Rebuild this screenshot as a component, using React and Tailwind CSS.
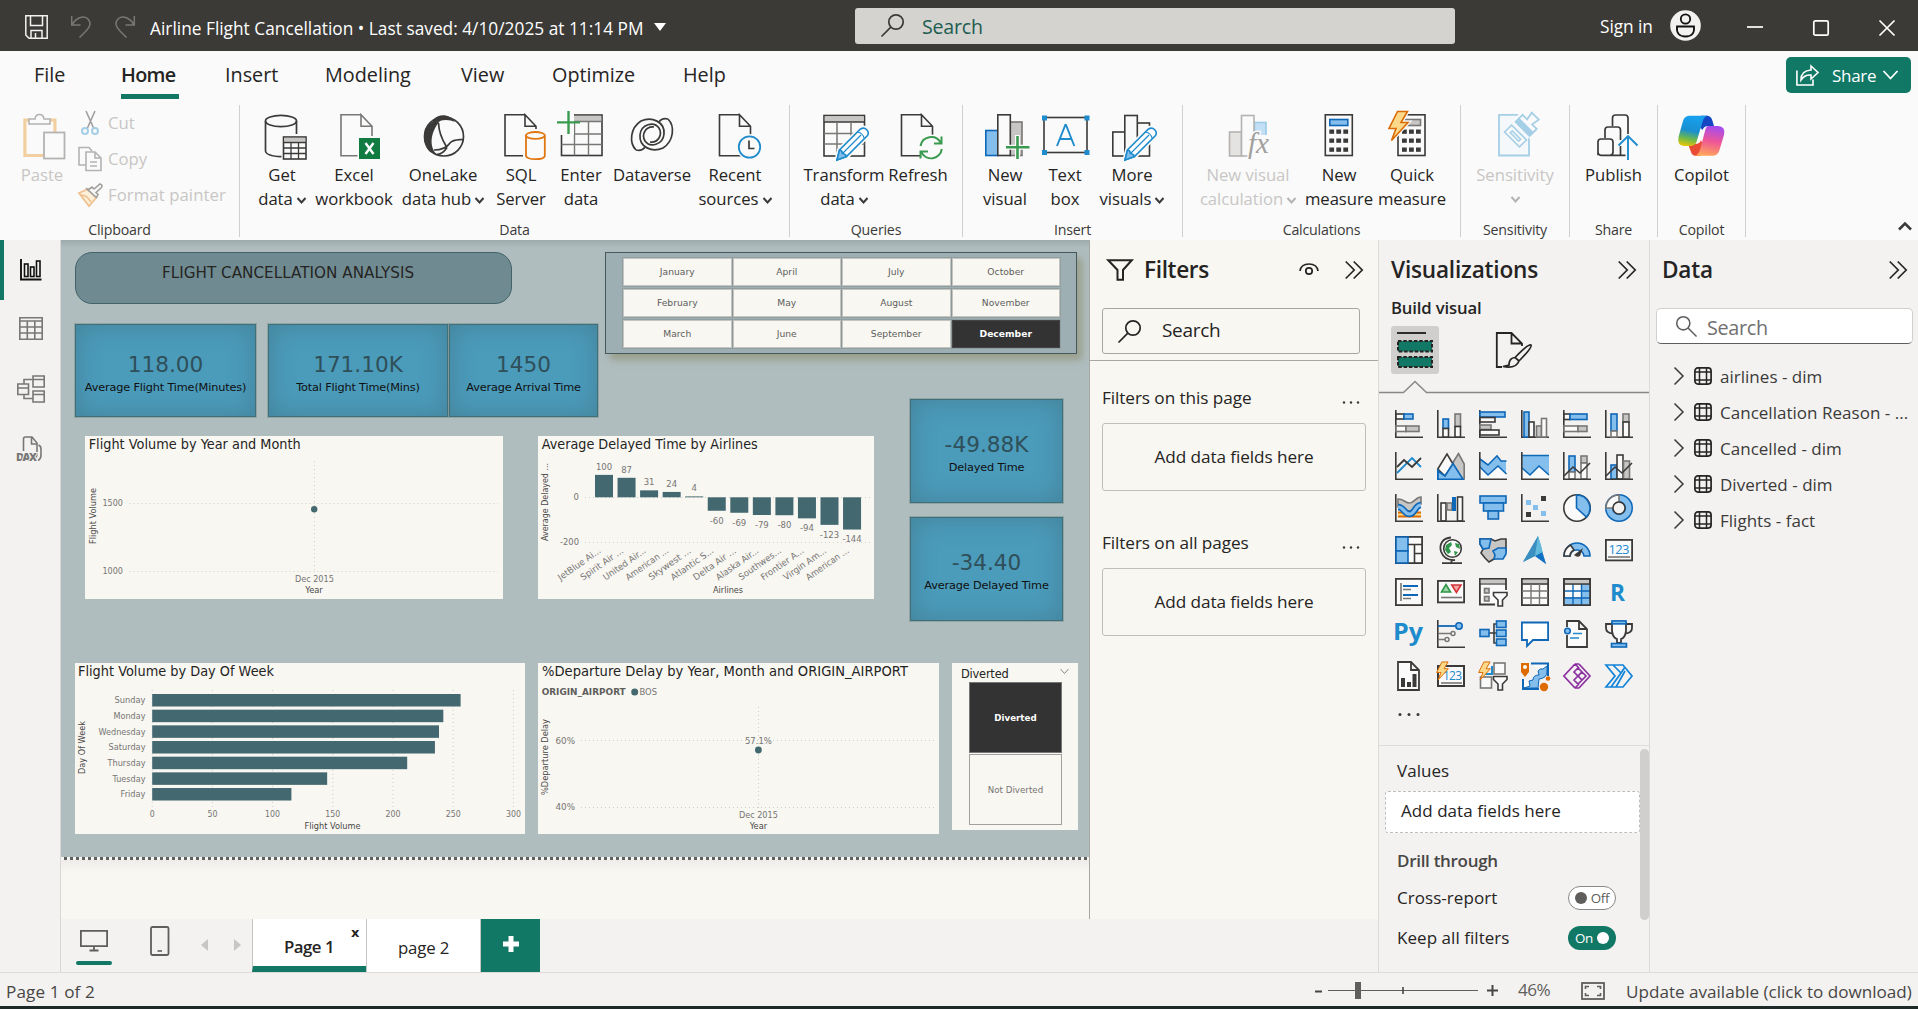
import React from 'react';

/* ---------- palette ---------- */
const K = '#3b3a39';
const BL = '#83beec';
const BD = '#0f67b7';
const BM = '#1e8bcd';
const GR = '#c8c6c4';
const GD = '#797775';
const WH = '#fafafa';
const TEAL = '#43686f';

/* ---------- drawing helpers ---------- */
const R = ({ x, y, w, h, f = 'none', s, sw = 1.6, ...p }) => (
  <rect x={x} y={y} width={w} height={h} fill={f} stroke={s} strokeWidth={s ? sw : 0} {...p} />
);
const P = ({ d, f = 'none', s, sw = 1.6, ...p }) => (
  <path d={d} fill={f} stroke={s} strokeWidth={s ? sw : 0} {...p} />
);
const Bl = (p) => <R f={BL} s={BD} {...p} />;
const Gy = (p) => <R f={GR} s={GD} {...p} />;
const Wt = (p) => <R f={WH} s={K} {...p} />;
const Axis = () => <P d="M.8 0V27.2H28" s={K} />;

const Svg = ({ w, h, children, className = '', vb }) => (
  <svg width={w} height={h} viewBox={vb || `0 0 ${w} ${h}`} className={'shrink-0 overflow-visible ' + className}>
    {children}
  </svg>
);

/* ---------- ribbon icons, 48 x 52 ---------- */
const Doc = ({ x, y = 4.8, w = 31, h = 41, s = K }) => (
  <P d={`M${x + w - 11} ${y}H${x}V${y + h}H${x + w}V${y + 11.5}L${x + w - 11} ${y}V${y + 11.5}H${x + w}`} f={WH} s={s} />
);
const Pencil = () => (
  <g>
    <P d="M17 50L19.5 40L40.5 19Q44 17 46.5 19.5Q49.5 22.5 47.5 25.5L26.5 46.5Z" f={WH} s={WH} sw="5" />
    <P d="M17 50L19.5 40L40.5 19Q44 17 46.5 19.5Q49.5 22.5 47.5 25.5L26.5 46.5Z" f="#fff" s={BM} />
    <P d="M17 50L19.5 40Q22 40 22.5 43.5Q26 44 26.5 46.5Z" f={BL} s={BM} />
    <P d="M37.5 22Q43 23 44.5 29M22.5 43.5L41 25" s={BM} sw="1.2" />
  </g>
);
const Bolt = () => <P d="M9.5 1.5H19.5L13 12.5H20L3.5 30.5L8 18.5H1Z" f="#fcd98a" s="#d96c06" />;

const GetData = () => (
  <g>
    <P d="M7.5 11V41Q7.5 46.5 22 46.5H24V26H38.5V11" f={WH} />
    <ellipse cx="23" cy="11" rx="15.5" ry="5.6" fill={WH} stroke={K} strokeWidth="1.7" />
    <P d="M7.5 11V41Q8 46 23.5 46.7M38.5 11V24" s={K} sw="1.7" />
    <Wt x={25.5} y={27} w={22.5} h={22} />
    <R x={26.3} y={27.8} w={21} h={4} f={GR} />
    <P d="M25.5 32.5H48M25.5 38H48M25.5 43.5H48M33 32V49M40.5 32V49" s={K} sw="1.3" />
  </g>
);
const ExcelI = () => (
  <g transform="translate(1 0)">
    <Doc x={10} s={GD} />
    <R x={26.5} y={26} w={23} h={24} f={WH} />
    <R x={28} y={28} w={21} h={21} f="#107c41" />
    <P d="M34.5 33L42.5 44M42.5 33L34.5 44" s="#fff" sw="2.4" />
  </g>
);
const OneLake = () => (
  <g>
    <circle cx="25" cy="26.5" r="19.5" fill={WH} stroke={K} strokeWidth="1.7" />
    <P d="M14 10C19 3.5 31 3.5 36 12C30 9 20 9 14 15Z" f={K} />
    <P d="M13 12C3 18 2.5 36 12 42.5L17 44C9 34 13 20 21 11Z" f={K} />
    <P d="M19.5 13C20 26 26 34 28 37.5M15 40C24 40 28 37.5 31 33C34 29.5 38 30 44 29.5M28 37.5Q24 44 18 44.5" s={K} sw="1.7" />
  </g>
);
const SqlI = () => (
  <g>
    <Doc x={8} />
    <R x={26} y={19} w={23} h={31} f={WH} />
    <P d="M29 25.5V46Q30 49.2 38.5 49.2Q47 49.2 47.8 46V25.5" f={WH} s="#e07712" sw="1.8" />
    <ellipse cx="38.4" cy="25.4" rx="9.4" ry="3.4" fill={WH} stroke="#e07712" strokeWidth="1.8" />
  </g>
);
const EnterI = () => (
  <g>
    <Wt x={4.5} y={5} w={40.5} h={40.5} />
    <R x={5.3} y={5.8} w={39} h={5.5} f={GR} />
    <P d="M4.5 11.5H45M4.5 24H45M4.5 34.5H45M17.5 11.5V45.5M31.5 11.5V45.5" s={GD} sw="1.4" />
    <R x={0} y={0} w={17} h={25} f={WH} />
    <P d="M11.5 1V24M0 12.4H23" s="#3a9b50" sw="2.4" />
  </g>
);
const DataverseI = () => (
  <g>
    <P d="M8 40C1 33 2 18 13 11C24 6 37 12 36 24C35 35 22 38 17 31C13 24 18 16 26 17" s={K} sw="1.7" />
    <P d="M40 9C47 16 46 31 35 38C24 43 11 37 12 25C13 14 26 11 31 18C35 25 30 33 22 32" s={K} sw="1.7" />
    <P d="M40 9C36 8 33 9 31 12M8 40C12 41 15 40 17 37" s={K} sw="1.7" />
  </g>
);
const RecentI = () => (
  <g>
    <Doc x={8.5} />
    <circle cx="38.5" cy="37" r="13" fill={WH} />
    <circle cx="38.5" cy="37" r="10.7" fill={WH} stroke={BM} strokeWidth="1.8" />
    <P d="M38 30.5V38.5H43.5" s={K} sw="1.7" />
  </g>
);
const TransformI = () => (
  <g>
    <Wt x={4} y={5.5} w={40.5} h={40.5} />
    <R x={4.8} y={6.3} w={39} h={5.5} f={GR} />
    <P d="M4 12H44.5" s={K} sw="1.6" />
    <P d="M4 23.5H44.5M4 34H44.5M17 12V46M31 12V46" s={GD} sw="1.5" />
    <Pencil />
  </g>
);
const RefreshI = () => (
  <g>
    <Doc x={7.5} />
    <circle cx="37" cy="37.5" r="13" fill={WH} />
    <P d="M26.5 36A10.8 10.8 0 0 1 46.5 32.5M47.8 39A10.8 10.8 0 0 1 27.5 42.5M47.5 26.5V33.5H40M26.5 48.5V41.5H34" s="#3a9b50" sw="2" />
  </g>
);
const NewVisualI = () => (
  <g>
    <Bl x={4.8} y={20.5} w={12} h={25} />
    <Gy x={29} y={12} w={12} h={33.5} />
    <Wt x={16.8} y={4.8} w={12.5} h={40.7} />
    <P d="M36.5 25V50M25 37.2H48.5" s={WH} sw="5" />
    <P d="M36.5 26V49M25 37.2H48.5" s="#3a9b50" sw="2.6" />
  </g>
);
const TextBoxI = () => (
  <g>
    <Wt x={3} y={7.5} w={43} h={35} />
    <P d="M16 36L24.3 15H25L33.3 36M19 29H30.3" s={BM} sw="1.9" />
    {[[1, 5.5], [43.5, 5.5], [1, 40], [43.5, 40]].map(([x, y]) => (
      <R key={x + '-' + y} x={x} y={y} w={5} h={5} f={BM} />
    ))}
  </g>
);
const MoreVisualsI = () => (
  <g>
    <Wt x={4.8} y={22} w={12} h={24} />
    <Wt x={29} y={13} w={12.5} h={33} />
    <Wt x={16.8} y={5.5} w={12.5} h={40.5} />
    <Pencil />
  </g>
);
const NvcI = () => (
  <g>
    <R x={5.5} y={22} w={12} h={24} f="#e4e3e1" s="#b5b3b1" />
    <R x={30.5} y={12.5} w={11.5} h={22} f="#c3dff5" s="#9ccbe8" />
    <R x={17.5} y={5.5} w={12.5} h={40.5} f={WH} s="#b5b3b1" />
    <R x={27} y={25} w={22} h={24} f={WH} />
    <text x="24" y="43" fontSize="29" fontStyle="italic" fill="#a19f9d" stroke={WH} strokeWidth="3" paintOrder="stroke" fontFamily="Liberation Serif, serif">fx</text>
  </g>
);
const Calc = ({ x = 10.3, top = BL, ts = BD }) => (
  <g>
    <Wt x={x} y={4.8} w={27} h={40.7} />
    <R x={x + 4.5} y={9.5} w={18} h={6} f={top} s={ts} />
    {[19.5, 28.5, 37.5].map((y) => [0, 7, 14].map((dx) => <R key={y + dx} x={x + 4 + dx} y={y} w={4.8} h={4.3} f={K} />))}
  </g>
);
const QuickI = () => (
  <g>
    <Calc x={10} top={GR} ts={GD} />
    <P d="M9.5 1.5H19.5L13 12.5H20L3.5 30.5L8 18.5H1Z" f={WH} s={WH} sw="4" />
    <Bolt />
  </g>
);
const SensI = () => (
  <g>
    <P d="M27 4.8H8V45.5H38V27" f="#f4f8fb" s="#a5cfe6" sw="1.8" />
    <g transform="translate(24.5 26) rotate(45)">
      <R x={-13} y={-30} w={26} h={22} f={WH} />
      <R x={-10.5} y={-5} w={21} h={10} f={WH} s="#a5cfe6" />
      <R x={-6} y={-1.5} w={12} h={3} f="#e3f0f8" s="#a5cfe6" sw="1.4" />
      <P d="M-10 -10V-20H-3.500L-5 -28H5L3.500 -20H10V-10Z" f={WH} s="#a5cfe6" sw="1.8" />
      <R x={-10} y={-15.5} w={20} h={6} f="#a5cfe6" />
    </g>
  </g>
);
const PublishI = () => (
  <g fill="none" stroke={K} strokeWidth="1.7">
    <path d="M22.5 16V8Q22.5 5 25.5 5H35Q38 5 38 8V24M15 28V20Q15 17 18 17H27.5Q30.5 17 30.5 20V30M8 45.3V32Q8 29 11 29H20Q23 29 23 32V42Q23 45.3 20 45.3H11Q8 45.3 8 42M19 45.3H35.5M30.5 36V45" />
    <path d="M38 50V26M28.5 35.5L38 26L47.5 35.5" stroke={BM} strokeWidth="1.9" />
  </g>
);
const CopilotI = () => (
  <g transform="translate(-1 0)">
    <defs>
      <linearGradient id="cpA" x1="0.3" y1="0" x2="0.1" y2="1">
        <stop offset="0" stopColor="#17a0ee" /><stop offset=".45" stopColor="#1a8fd0" /><stop offset=".72" stopColor="#6cb84c" /><stop offset="1" stopColor="#f7c800" />
      </linearGradient>
      <linearGradient id="cpB" x1="0.6" y1="0" x2="0.4" y2="1">
        <stop offset="0" stopColor="#a44cf0" /><stop offset=".5" stopColor="#ef5696" /><stop offset="1" stopColor="#ffa65a" />
      </linearGradient>
    </defs>
    <P d="M24 5.8H30Q34 6 35.2 10L37 16H31Q27 16 25.5 20L20 14Z" f="#1547c4" />
    <P d="M11 34H18Q23 34 24 30L28 40Q26 46 20 46Q15 46 14 42Z" f="#ea4b35" />
    <P d="M12 5.800H31Q27 6 25.5 12L19.5 32Q18 36 13 36H7Q0 35.500 1.500 27L6 11Q7.500 6 12 5.800Z" f="url(#cpA)" />
    <P d="M31 16H41Q49 16.500 47 25L42.500 40Q41 45.500 36 45.800H17Q21.500 45 23 40L28.500 19Q29.500 16 31 16Z" f="url(#cpB)" />
  </g>
);

/* ---------- chrome ---------- */
const Chev = ({ w = 9, h = 5, s = K, sw = 2, className = '' }) => (
  <Svg w={w} h={h} className={className}><P d={`M0.5 0L${w / 2} ${h - 0.5}L${w - 0.5} 0`} s={s} sw={sw} /></Svg>
);
const Lens = ({ size = 23, s = K, sw = 1.7, flip }) => (
  <Svg w={size} h={size} vb="0 0 23 23" className={flip ? '-scale-x-100' : ''}>
    <circle cx="15" cy="8" r="7.2" fill="none" stroke={s} strokeWidth={sw} />
    <P d="M9.8 13.2L0.5 22.5" s={s} sw={sw} />
  </Svg>
);
const Collapse = () => (
  <Svg w={18} h={18}><P d="M0.7 0.5L9.2 9L0.7 17.5M8.7 0.5L17.2 9L8.7 17.5" s="#252423" sw="1.7" /></Svg>
);

const TitleBar = () => (
  <header className="flex h-[51px] w-full items-center bg-[#3b3a37] text-white">
    <div className="flex w-[855px] items-center pl-[25px] pt-[2px]">
      <Svg w={23} h={24}>
        <P d="M.8.8H22.2V23.2H4L.8 20ZM5.5.8V10.5H17.5V.8M6 23V15.5H17V23M10.5 18V23" s="#f3f2f1" sw="1.5" />
      </Svg>
      <Svg w={20} h={23} className="ml-[23px]"><P d="M.7 1V10H9.5M1 9.5C5 3 12 0 16.5 3.5C21 8 19 12 15 16L8.5 22.5" s="#797775" sw="1.5" /></Svg>
      <Svg w={20} h={23} className="ml-6"><P d="M19.3 1V10H10.5M19 9.5C15 3 8 0 3.5 3.5C-1 8 1 12 5 16L11.5 22.5" s="#797775" sw="1.5" /></Svg>
      <span className="ml-[15px] mt-1 whitespace-nowrap text-[17.3px] tracking-[0.01px]">Airline Flight Cancellation • Last saved: 4/10/2025 at 11:14 PM</span>
      <Svg w={12} h={8} className="ml-[10px] mt-px"><P d="M0 0H12L6 8Z" f="#fff" /></Svg>
    </div>
    <div className="flex h-9 w-[600px] items-center rounded-[3px] bg-[#d4d3d0] pl-[26px]">
      <Lens s={K} />
      <span className="ml-[18px] mt-[3px] text-[19.6px] tracking-[-0.2px] text-[#215c50]">Search</span>
    </div>
    <div className="flex flex-1 items-center pl-[145px]">
      <span className="mt-[2px] w-[54px] whitespace-nowrap text-[17.3px] tracking-[-0.05px]">Sign in</span>
      <Svg w={31} h={31} className="ml-[16px]">
        <circle cx="15.5" cy="15.5" r="15.3" fill="#f3f2f1" />
        <circle cx="15.5" cy="9" r="4.7" fill="none" stroke="#111" strokeWidth="1.8" />
        <P d="M7 16.5H24Q25 26.5 15.5 26.5Q6 26.5 7 16.5Z" s="#111" sw="1.8" />
      </Svg>
      <Svg w={16} h={16} className="ml-[46px]"><P d="M0 9H16" s="#fff" sw="1.7" /></Svg>
      <Svg w={16} h={16} className="ml-[50px] mt-[4px]"><R x={0.8} y={0.8} w={14.4} h={14.4} rx="1.5" s="#fff" sw="1.7" /></Svg>
      <Svg w={16} h={16} className="ml-[50px] mt-[4px]"><P d="M.5.5L15.5 15.5M15.5.5L.5 15.5" s="#fff" sw="1.7" /></Svg>
    </div>
  </header>
);

const MENUS = [
  ['Insert', 'w-[100px] pl-[12px]'], ['Modeling', 'w-[136px] pl-[12px]'],
  ['View', 'w-[91px] pl-[12px]'], ['Optimize', 'w-[132px] pl-[12px]'], ['Help', 'w-[80px] pl-[11px]'],
];
const MenuBar = () => (
  <nav className="flex h-[49px] items-start text-[19.8px] text-[#252423]">
    <span className="w-[121px] pl-[34px] pt-[9px]">File</span>
    <span className="flex w-[58px] flex-col pt-[9px] font-semibold tracking-[-0.7px]">
      Home
      <span className="mt-[4px] h-[5px] w-[58px] bg-[#117865]" />
    </span>
    <span className="w-[34px]" />
    {MENUS.map(([t, c]) => <span key={t} className={'pt-[9px] ' + c}>{t}</span>)}
    <span className="flex-1" />
    <button className="mr-[7px] mt-[6px] flex h-9 w-[125px] items-center rounded-[5px] bg-[#117865] pl-[10px] text-[17px] tracking-[-0.3px] text-white">
      <Svg w={23} h={21}>
        <P d="M.9 5.5V20H17V14.5" s="#fff" sw="1.6" />
        <P d="M5 15Q5 5.5 15 5V1L22 7.5L15 14V10Q8.5 9.5 5 15Z" s="#fff" sw="1.6" />
      </Svg>
      <span className="ml-[13px] mt-px">Share</span>
      <Chev w={15} h={8} s="#fff" sw={1.8} className="ml-[7px]" />
    </button>
  </nav>
);

const Item = ({ icon, a, b, chev, w, muted }) => (
  <div className={'flex flex-col items-center ' + w + (muted ? ' text-[#c8c6c4]' : ' text-[#252423]')}>
    <Svg w={48} h={52}>{icon}</Svg>
    <span className="mt-px h-6 whitespace-nowrap leading-6">{a}</span>
    <span className="flex h-6 items-center whitespace-nowrap leading-6">{b}{chev && <Chev s={muted ? '#b5b3b1' : K} className={b ? 'ml-[4px] mt-[3px]' : ''} />}</span>
  </div>
);
const Group = ({ w, label, pl = '', children }) => (
  <section className={'flex h-[132px] flex-col border-r border-[#d2d0ce] ' + w}>
    <div className={'flex h-[114px] ' + pl}>{children}</div>
    <span className="h-[18px] text-center text-[14.2px] leading-[22px] tracking-[-0.2px] text-[#3b3a39]">{label}</span>
  </section>
);
const Ribbon = () => (
  <div className="flex h-[140px] pt-[5px] text-[16.7px] tracking-[-0.04px]">
    <Group w="w-[240px]" label="Clipboard" pl="text-[#c8c6c4]">
      <div className="ml-[18px] mt-[5px] flex w-12 flex-col items-center">
        <Svg w={48} h={52}>
          <g transform="translate(-1 0)">
            <P d="M14 10H7.8V45.5H29V30H38V10H32" f="#fdf3df" s="#f2cfa0" sw="3" />
            <R x={10} y={12} w={26} h={32} f={WH} />
            <P d="M12 12V9H18Q18.5 4.5 22.5 4.5Q26.5 4.5 27 9H33V14H12Z" f={WH} s="#b5b3b1" />
            <R x={27} y={22.5} w={20.5} h={26} f={WH} s="#b5b3b1" sw="1.8" />
          </g>
        </Svg>
        <span className="mt-px leading-6">Paste</span>
      </div>
      <div className="ml-3 flex flex-col">
        <div className="flex h-9 items-center">
          <Svg w={26} h={26}>
            <P d="M8 1L16 19M17 1L9 19" s="#a19f9d" sw="1.6" />
            <circle cx="7" cy="21" r="3" fill="none" stroke="#a5cfe6" strokeWidth="2" /><circle cx="17" cy="21" r="3" fill="none" stroke="#a5cfe6" strokeWidth="2" />
          </Svg>
          <span className="ml-1">Cut</span>
        </div>
        <div className="flex h-9 items-center">
          <Svg w={26} h={26}>
            <P d="M8 19H1V1.5H11L14 5" s="#b5b3b1" />
            <P d="M8 6H17L23 12V24.5H8ZM17 6V12H23M12 16H19M12 20H19" f={WH} s="#b5b3b1" />
          </Svg>
          <span className="ml-1">Copy</span>
        </div>
        <div className="flex h-9 items-center">
          <Svg w={26} h={26}>
            <P d="M1 11L10 7L18 16L11 24Z" f="#fdf0d8" s="#efc191" sw="1.8" />
            <P d="M8 6L19 16M10 8L14 5L16 7L22 2Q25 3 23.5 5.5L18 10.5L20 12.5L18.5 15.5Z" f={WH} s="#a19f9d" />
            <P d="M3 13Q9 13 13 20" s="#efc191" />
          </Svg>
          <span className="ml-1 whitespace-nowrap tracking-[0.1px]">Format painter</span>
        </div>
      </div>
    </Group>
    <Group w="w-[550px]" label="Data" pl="pt-[5px] pl-[11px]">
      <Item w="w-[62px]" icon={<GetData />} a="Get" b="data" chev />
      <Item w="w-[82px]" icon={<ExcelI />} a="Excel" b="workbook" />
      <Item w="w-[96px]" icon={<OneLake />} a="OneLake" b="data hub" chev />
      <Item w="w-[60px]" icon={<SqlI />} a="SQL" b="Server" />
      <Item w="w-[60px]" icon={<EnterI />} a="Enter" b="data" />
      <Item w="w-[82px]" icon={<DataverseI />} a="Dataverse" />
      <Item w="w-[84px]" icon={<RecentI />} a="Recent" b="sources" chev />
    </Group>
    <Group w="w-[173px]" label="Queries" pl="pt-[5px] pl-[12px]">
      <Item w="w-[84px]" icon={<TransformI />} a="Transform" b="data" chev />
      <Item w="w-[64px]" icon={<RefreshI />} a="Refresh" />
    </Group>
    <Group w="w-[220px]" label="Insert" pl="pt-[5px] pl-[14px]">
      <Item w="w-[56px]" icon={<NewVisualI />} a="New" b="visual" />
      <Item w="w-[64px]" icon={<TextBoxI />} a="Text" b="box" />
      <Item w="w-[70px]" icon={<MoreVisualsI />} a="More" b="visuals" chev />
    </Group>
    <Group w="w-[278px]" label="Calculations" pl="pt-[5px] pl-[11px]">
      <Item w="w-[108px]" icon={<NvcI />} a="New visual" b="calculation" chev muted />
      <Item w="w-[74px]" icon={<Calc />} a="New" b="measure" />
      <Item w="w-[72px]" icon={<QuickI />} a="Quick" b="measure" />
    </Group>
    <Group w="w-[109px]" label="Sensitivity" pl="pt-[5px] justify-center">
      <Item w="w-[90px]" icon={<SensI />} a="Sensitivity" chev muted />
    </Group>
    <Group w="w-[88px]" label="Share" pl="pt-[5px] justify-center">
      <Item w="w-[70px]" icon={<PublishI />} a="Publish" />
    </Group>
    <Group w="w-[88px]" label="Copilot" pl="pt-[5px] justify-center">
      <Item w="w-[70px]" icon={<CopilotI />} a="Copilot" />
    </Group>
    <div className="flex flex-1 items-end justify-end pb-[10px] pr-[6px]">
      <Svg w={14} h={8}><P d="M1 7.5L7 1.5L13 7.5" s={K} sw="2.6" /></Svg>
    </div>
  </div>
);

/* ---------- left rail ---------- */
const Rail = () => (
  <aside className="flex w-[61px] shrink-0 flex-col items-center border-r border-[#d8d7d5] bg-[#f3f2f1]">
    <div className="flex h-[60px] w-full items-center justify-center border-l-4 border-[#117865] pb-px pr-[3px]">
      <Svg w={22} h={22}>
        <P d="M1 0V20.5H21.5" s="#111" sw="1.9" />
        <g fill="none" stroke="#111" strokeWidth="1.6"><rect x="4.5" y="5" width="3.5" height="12.5" /><rect x="10.5" y="8" width="3.5" height="9.5" /><rect x="16.5" y="2" width="3.5" height="15.500" /></g>
      </Svg>
    </div>
    <div className="flex h-[58px] items-center pb-px pl-px">
      <Svg w={24} h={23}><P d="M.8.8H23.2V22.2H.8ZM.8 4H23.2M.8 10H23.2M.8 16H23.2M8.3 4V22M15.8 4V22" s="#797775" /></Svg>
    </div>
    <div className="flex h-[62px] items-center pb-px pl-[2px]">
      <Svg w={28} h={28}><P d="M.8 9H11.5V19.5H.8ZM.8 13H11.5M16 1H27.2V12H16ZM16 4.5H27.2M16 16H27.2V27H16ZM16 19.5H27.2M7 9V4.5H16M7 19.5V23.5H16" s="#797775" /></Svg>
    </div>
    <div className="flex h-[60px] items-center">
      <Svg w={28} h={28}>
        <P d="M7.5 15V3Q7.5 1 9.5 1H16L21 7V18Q21 21 19 22M15.5 1V8H21M22.5 9Q25 10 25 13V19Q25 23 22 24.5" s="#797775" />
        <text x="0" y="25" fontSize="11" fontWeight="800" fill="#797775" textLength="21" stroke="#f3f2f1" strokeWidth="2" paintOrder="stroke" fontFamily="Open Sans, sans-serif">DAX</text>
      </Svg>
    </div>
  </aside>
);

/* ---------- report canvas ---------- */
const Tx = ({ x, y, w, s = 8.5, a = 'middle', c = '#777573', children, ...p }) => (
  <text x={x} y={y + s * 0.365} fontSize={s} textAnchor={a} fill={c} textLength={w} lengthAdjust="spacingAndGlyphs" {...p}>{children}</text>
);
const Dots = ({ d }) => <path d={d} stroke="#cfcdc9" strokeWidth="1" strokeDasharray="1 3" fill="none" />;
const VTx = ({ x, y, w, children }) => (
  <text transform={`translate(${x + 3} ${y}) rotate(-90)`} fontSize="8.6" textAnchor="middle" fill="#4a4846" textLength={w} lengthAdjust="spacingAndGlyphs">{children}</text>
);
const Chart = ({ box, vb, children }) => (
  <svg className={'absolute bg-[#f8f7f2] ' + box} viewBox={vb}>{children}</svg>
);
const Kpi = ({ box, v, t, pt = 'pt-[26px]' }) => (
  <div className={'absolute flex flex-col items-center border border-[#3f6f78] bg-[#4b9bbb] shadow-[inset_0_0_26px_rgba(60,100,110,0.45),0_0_0_1px_rgba(120,140,140,0.5)] ' + box + ' ' + pt}>
    <span className="h-7 text-[21.6px] leading-7 text-[#2f4f59]">{v}</span>
    <span className="mt-px h-4 whitespace-nowrap text-[11.3px] leading-4 tracking-[-0.17px] text-[#101010]">{t}</span>
  </div>
);

const DELAYS = [
  ['JetBlue Ai...', 100], ['Spirit Air ...', 87], ['United Air...', 31], ['American ...', 24], ['Skywest ...', 4], ['Atlantic S...', -60],
  ['Delta Air ...', -69], ['Alaska Air...', -79], ['Southwes...', -80], ['Frontier A...', -94], ['Virgin Am...', -123], ['American ...', -144],
];
const DAYS = [['Sunday', 257, 31], ['Monday', 242.6, 32], ['Wednesday', 239, 47], ['Saturday', 235.6, 37], ['Thursday', 212.5, 38], ['Tuesday', 145.8, 33], ['Friday', 116, 25]];
const MONTHS = ['January', 'April', 'July', 'October', 'February', 'May', 'August', 'November', 'March', 'June', 'September', 'December'];

const Report = () => (
  <div className="relative h-[617px] w-full overflow-hidden bg-[#afbdbf] font-['DejaVu_Sans','Noto_Sans',sans-serif]">
    <div className="absolute left-[14px] top-[12px] flex h-[52px] w-[437px] justify-center rounded-[17px] border border-[#42636b] bg-[#6f8b91] pr-[11px] pt-[8px]">
      <span className="whitespace-nowrap text-[15.2px] leading-6 tracking-[0.02px] text-[#252423]">FLIGHT CANCELLATION ANALYSIS</span>
    </div>
    <Kpi box="left-[14px] top-[84px] h-[93px] w-[181px]" v="118.00" t="Average Flight Time(Minutes)" />
    <Kpi box="left-[207px] top-[84px] h-[93px] w-[180px]" v="171.10K" t="Total Flight Time(Mins)" />
    <Kpi box="left-[388px] top-[84px] h-[93px] w-[149px]" v="1450" t="Average Arrival Time" />
    <Kpi box="left-[849px] top-[159px] h-[104px] w-[153px]" v="-49.88K" t="Delayed Time" pt="pt-[31px]" />
    <Kpi box="left-[849px] top-[277px] h-[104px] w-[153px]" v="-34.40" t="Average Delayed Time" pt="pt-[31px]" />

    <div className="absolute left-[544px] top-[12px] grid h-[102px] w-[472px] grid-cols-4 content-start gap-x-px gap-y-[3px] border border-[#46585b] bg-[#9dafb3] pl-[17px] pr-[16px] pt-[5px] shadow-[5px_6px_7px_rgba(140,140,105,0.6)]">
      {MONTHS.map((m) => (
        <span key={m} className={'flex h-[28px] items-center justify-center border text-[9.2px] shadow-[0_0_0_1px_rgba(130,140,140,0.45)] ' + (m === 'December' ? 'border-[#444] bg-[#333] font-semibold text-white' : 'border-[#c4c5c1] bg-[#f8f7f2] text-[#605e5c]')}>{m}</span>
      ))}
    </div>

    <Chart box="left-[24px] top-[196px] h-[163px] w-[418px]" vb="85 436 418 163">
      <Tx x={88.7} y={443.7} w={212} s={13.4} a="start" c="#252423">Flight Volume by Year and Month</Tx>
      <VTx x={92.6} y={516} w={56}>Flight Volume</VTx>
      <Tx x={123} y={503} w={20.5} a="end">1500</Tx>
      <Tx x={123} y={571} w={20.5} a="end">1000</Tx>
      <Dots d="M129.5 503.5H498M129.5 571.5H498" />
      <Dots d="M314.5 461V571" />
      <circle cx="314.2" cy="509.3" r="3.2" fill={TEAL} />
      <Tx x={314.4} y={579} w={39}>Dec 2015</Tx>
      <Tx x={314} y={590} w={17.5} c="#4a4846">Year</Tx>
    </Chart>

    <Chart box="left-[477px] top-[196px] h-[163px] w-[336px]" vb="538 436 336 163">
      <Tx x={541.7} y={443.7} w={216} s={13.4} a="start" c="#252423">Average Delayed Time by Airlines</Tx>
      <VTx x={545} y={502} w={78}>Average Delayed ...</VTx>
      <Tx x={579} y={497} a="end">0</Tx>
      <Tx x={579} y={542} w={19} a="end">-200</Tx>
      <Dots d="M585 497.5H871M585 542.5H871" />
      {DELAYS.map(([n, v], i) => {
        const cx = 604 + i * 22.55;
        const h = Math.abs(v) * 0.224;
        return (
          <g key={i}>
            <rect x={cx - 9} y={v > 0 ? 497.3 - h : 497.3} width="18" height={h} fill={TEAL} />
            <Tx x={cx} y={v > 0 ? 489 - h : 507 + h}>{v}</Tx>
            <text transform={`translate(${cx - 2.5} 552) rotate(-35)`} fontSize="9" textAnchor="end" fill="#777573" textLength={n.length > 11 ? 50 : n.length * 4.5} lengthAdjust="spacingAndGlyphs">{n}</text>
          </g>
        );
      })}
      <Tx x={728} y={590} w={30} c="#4a4846">Airlines</Tx>
    </Chart>

    <Chart box="left-[14px] top-[423px] h-[171px] w-[450px]" vb="75 663 450 171">
      <Tx x={78} y={670.9} w={196} s={13.4} a="start" c="#252423">Flight Volume by Day Of Week</Tx>
      <VTx x={81.5} y={747.5} w={53}>Day Of Week</VTx>
      {[0, 50, 100, 150, 200, 250, 300].map((t) => (
        <g key={t}>
          <Dots d={`M${152.2 + t * 1.204} 690V808`} />
          <Tx x={152.2 + t * 1.204} y={814} w={String(t).length * 5}>{t}</Tx>
        </g>
      ))}
      {DAYS.map(([n, v, w], i) => (
        <g key={n}>
          <rect x="152.2" y={694 + i * 15.67} width={v * 1.2} height="12.5" fill={TEAL} />
          <Tx x={145.5} y={700.3 + i * 15.67} w={w} a="end">{n}</Tx>
        </g>
      ))}
      <Tx x={332.5} y={826} w={56} c="#4a4846">Flight Volume</Tx>
    </Chart>

    <Chart box="left-[477px] top-[423px] h-[171px] w-[401px]" vb="538 663 401 171">
      <Tx x={542} y={670.9} w={366} s={13.4} a="start" c="#252423">%Departure Delay by Year, Month and ORIGIN_AIRPORT</Tx>
      <Tx x={541.7} y={692} w={84} a="start" fontWeight="700" c="#605e5c">ORIGIN_AIRPORT</Tx>
      <circle cx="634.7" cy="692" r="3.5" fill={TEAL} />
      <Tx x={639.5} y={692} w={17.5} a="start">BOS</Tx>
      <VTx x={545} y={757} w={76}>%Departure Delay</VTx>
      <Tx x={575} y={741} w={19.5} a="end">60%</Tx>
      <Tx x={575} y={807} w={19.5} a="end">40%</Tx>
      <Dots d="M581 740.5H935M581 807.5H935" />
      <Dots d="M758.5 707V808" />
      <Tx x={758.4} y={741} w={27}>57.1%</Tx>
      <circle cx="758.4" cy="750" r="3.4" fill={TEAL} />
      <Tx x={758.4} y={815} w={39}>Dec 2015</Tx>
      <Tx x={758.4} y={826} w={17.5} c="#4a4846">Year</Tx>
    </Chart>

    <div className="absolute left-[891px] top-[423px] flex h-[167px] w-[126px] flex-col bg-[#f8f7f2] pl-[17px] text-[8.7px]">
      <div className="-ml-2 flex h-[19px] items-center justify-between pr-[9px] pt-[5px] text-[11.4px] text-[#252423]">
        <span className="tracking-[-0.2px]">Diverted</span><Chev w={9} h={5} s="#8a8886" sw={1} className="mb-2" />
      </div>
      <span className="flex h-[71px] w-[93px] items-center justify-center border border-[#777] bg-[#333] pt-[2px] font-semibold text-white">Diverted</span>
      <span className="mt-px flex h-[71px] w-[93px] items-center justify-center border border-[#a3a19f] pt-[2px] text-[#777573]">Not Diverted</span>
    </div>
    <div className="absolute inset-x-0 top-0 h-2 bg-linear-to-b from-black/10 to-transparent" />
  </div>
);

const PageTabs = () => (
  <div className="flex h-[53px] w-full bg-[#f3f2f1] text-[16.8px] tracking-[-0.15px] text-[#252423]">
    <div className="flex w-[191px] items-start">
      <div className="ml-[15px] flex w-9 flex-col items-center pt-[11px]">
        <Svg w={28} h={22} className="-ml-px"><P d="M.9.9H27.1V16.2H.9ZM14 16.5V20.5M9.5 20.5H18.5" s="#605e5c" sw="1.8" /></Svg>
        <span className="mt-[9px] h-[4px] w-9 rounded-sm bg-[#117865]" />
      </div>
      <Svg w={20} h={30} className="ml-[38px] mt-[7px]"><R x={1} y={1} w={17.5} h={28} rx="1.5" s="#605e5c" sw="1.8" /><P d="M7.5 25H12" s="#605e5c" sw="1.6" /></Svg>
      <Svg w={7} h={12} className="ml-[31px] mt-[20px]"><P d="M7 0V12L0 6Z" f="#c8c6c4" /></Svg>
      <Svg w={7} h={12} className="ml-[26px] mt-[20px]"><P d="M0 0V12L7 6Z" f="#c8c6c4" /></Svg>
    </div>
    <div className="relative flex w-[114px] items-center justify-center border-b-[6px] border-l border-[#117865] border-l-[#c8c6c4] bg-white pr-px pt-[9px] font-semibold tracking-[-0.5px]">
      Page 1
      <span className="absolute right-[7px] top-[2px] font-['DejaVu_Sans'] text-[13px] font-bold leading-6">x</span>
    </div>
    <div className="flex w-[115px] items-center justify-center border-x border-[#c8c6c4] bg-white pt-[4px]">page 2</div>
    <div className="flex w-[59px] items-center justify-center bg-[#117865] pb-[3px]">
      <Svg w={16} h={16}><P d="M8 0V16M0 8H16" s="#fff" sw="5" /></Svg>
    </div>
  </div>
);

/* ---------- filters ---------- */
const DropBox = () => (
  <div className="mt-[12px] flex h-[68px] w-[264px] items-center justify-center rounded-[3px] border border-[#c0bebb]">Add data fields here</div>
);
const Ell = () => <Svg w={18} h={3}><circle cx="2" cy="1.5" r="1.2" fill={K} /><circle cx="9" cy="1.5" r="1.2" fill={K} /><circle cx="16" cy="1.5" r="1.2" fill={K} /></Svg>;
const Filters = () => (
  <aside className="flex h-[679px] w-[288px] shrink-0 flex-col bg-[#f8f7f2] text-[17.2px] tracking-[-0.08px] text-[#252423]">
    <div className="flex h-[60px] items-center pb-px pl-[17px]">
      <Svg w={26} h={22}><P d="M1.2 1.2H24.8L16 11V20.8H10.5V11Z" s="#252423" sw="2" /></Svg>
      <span className="ml-[11px] w-[137px] text-[22.6px] font-semibold tracking-[-0.35px]">Filters</span>
      <Svg w={20} h={13} className="ml-[18px]"><P d="M1 8Q2 1 10 1Q18 1 19 8" s="#252423" sw="1.7" /><circle cx="10" cy="8" r="3.2" fill="none" stroke="#252423" strokeWidth="1.7" /></Svg>
      <span className="w-[26px]" />
      <Collapse />
    </div>
    <div className="ml-3 mt-2 flex h-[46px] w-[258px] items-center rounded-[3px] border border-[#a8a6a3] pl-[15px] text-[19px]">
      <Lens s="#252423" />
      <span className="ml-[21px] -mt-px tracking-[-0.3px]">Search</span>
    </div>
    <div className="mt-[6px] h-px bg-[#a8a6a3]" />
    <div className="flex flex-col pl-3 pt-[23px]">
      <div className="flex h-[27px] items-center justify-between pr-[18px]"><span>Filters on this page</span><span className="pt-2.5"><Ell /></span></div>
      <DropBox />
      <div className="mt-[38px] flex h-[27px] items-center justify-between pr-[18px]"><span>Filters on all pages</span><span className="pt-2.5"><Ell /></span></div>
      <DropBox />
    </div>
  </aside>
);

/* ---------- visual gallery icons, 28 x 28 ---------- */
const GALLERY = [
  <g><Axis /><Wt x={1} y={4} w={8} h={5} /><Bl x={9} y={4} w={9} h={5} /><Wt x={1} y={16} w={10} h={5.5} s={GD} /><Gy x={11} y={16} w={13} h={5.5} /></g>,
  <g><Axis /><Bl x={6} y={9} w={5.5} h={9.5} /><Wt x={6} y={18.5} w={5.5} h={8.5} /><Gy x={18} y={4} w={5.5} h={12.5} /><Wt x={18} y={16.5} w={5.5} h={10.5} /></g>,
  <g><Axis /><Bl x={1} y={2} w={25} h={5} /><Wt x={1} y={7.5} w={15} h={4.5} /><Gy x={1} y={15} w={11} h={4.5} /><Wt x={1} y={20} w={19} h={5} /></g>,
  <g><Axis /><Bl x={3} y={2} w={5} h={25} /><Wt x={8} y={12} w={5} h={15} /><Gy x={15.5} y={16} w={5} h={11} /><Wt x={20.5} y={8.5} w={5} h={18.5} s={GD} /></g>,
  <g><Axis /><Wt x={1} y={4} w={6} h={5.5} /><Bl x={7} y={4} w={17} h={5.5} /><Wt x={1} y={16} w={14} h={5.5} s={GD} /><Gy x={15} y={16} w={9} h={5.5} /></g>,
  <g><Axis /><Bl x={6} y={4} w={6} h={17} /><Wt x={6} y={21} w={6} h={6} s={GD} /><Gy x={18} y={4} w={6} h={8} /><Wt x={18} y={12} w={6} h={15} /></g>,
  <g><Axis /><P d="M2 21L17 6L26 15" s={BM} sw="1.8" /><P d="M2 15L9 8L17 15L26 6" s={K} sw="1.8" /></g>,
  <g><P d="M15 12L21.5 1.5L27.2 12V27H20Z" f={GR} s={GD} /><P d="M.8 17L10 2L16 12L8 24Z" f={WH} s={K} /><P d="M.8 27.2V19L8 24L16 11.5L26 27.2Z" f={BL} s={BD} /><P d="M.8 17V27" s={BD} /></g>,
  <g><P d="M1 7L9 13L18 5L21 9H27V22H26L19 14L9 23L1 15Z" f={BL} /><P d="M27 22V27H1V15L9 23L19 14Z" f={WH} /><P d="M1 7L9 13L18 4L22 9H27.5M1 15L9 23L19 14L27.5 22" s={BD} /><Axis /></g>,
  <g><R x={1} y={3} w={27} h={20} f={BL} /><P d="M1 16L9 23L18 14L28 23V26H1Z" f={WH} /><P d="M1 3.5H28M1 16L9 23L18 14L28 23" s={BD} /><Axis /></g>,
  <g><Bl x={6} y={4} w={6} h={16} /><Wt x={6} y={20} w={6} h={7} s={GD} /><Gy x={18} y={4} w={6} h={7} /><Wt x={18} y={11} w={6} h={16} s={GD} /><Axis /><P d="M1 24L10 15L17 21L27 11" s={K} /></g>,
  <g><Bl x={6} y={13} w={6} h={14} /><Wt x={12} y={3} w={6} h={24} /><Gy x={18.5} y={9} w={6} h={18} /><Axis /><P d="M1 24L10 15L17 21L27 11" s={K} /></g>,
  <g><P d="M3 20.5H26" s="#dd6b00" sw="6" /><P d="M3 20.5H26" s="#fcd98a" sw="2" /><P d="M3 5C9 5 10 9 14.5 9C19 9 21 3 26 3V10C20 11 19 17 14.5 17C9 17 9 13 3 13Z" f={GR} s={GD} /><P d="M3 13C9 13 9 20 14.5 20C20 20 20 11 26 11" s={BD} sw="6.5" /><P d="M3 13C9 13 9 20 14.5 20C20 20 20 11 26 11" s={BL} sw="3.2" /><Axis /></g>,
  <g><Wt x={4} y={9} w={5} h={18} /><Gy x={10} y={9} w={5} h={7} /><R x={15} y={3} w={4} h={14} f={BD} /><Wt x={20.5} y={3} w={5} h={24} /><Axis /></g>,
  <g><Bl x={1} y={2} w={26} h={7} /><Bl x={4.5} y={9} w={20} h={8} /><Bl x={9} y={17} w={10.5} h={8} /></g>,
  <g><Axis /><R x={5} y={6} w={5} h={5} f={BL} /><R x={20} y={2} w={5} h={5} f={K} /><R x={12} y={11} w={5} h={5} f={BL} /><R x={5} y={18} w={5} h={5} f={K} /><R x={20} y={17} w={5} h={5} f={BL} /></g>,
  <g><circle cx="14" cy="14" r="13.2" fill={WH} stroke={K} strokeWidth="1.6" /><P d="M13.5 1A13.2 13.2 0 0 1 23.5 23L13.5 14Z" f={BL} s={BD} /></g>,
  <g><circle cx="14" cy="14" r="9.8" fill="none" stroke={BD} strokeWidth="8.4" /><circle cx="14" cy="14" r="9.8" fill="none" stroke={BL} strokeWidth="5.4" /><P d="M1 14A13 13 0 0 1 14 1V8A6 6 0 0 0 8 14Z" f={WH} s={GD} /><circle cx="14" cy="14" r="6" fill="#f3f2f1" stroke={K} strokeWidth="1.5" /></g>,
  <g><R x={0.9} y={0.9} w={26.2} h={26.2} f={WH} s={K} sw={1.8} /><Bl x={1} y={1} w={12} h={14} /><Bl x={1} y={15} w={12} h={12} /><P d="M13 8.5H27M19.5 8.5V27M19.5 17.5H27" s={K} /></g>,
  <g><circle cx="15.5" cy="12.5" r="8.8" fill={WH} stroke={K} strokeWidth="1.6" /><P d="M9 9L14 6L15 9L12 12L14 16L11 18L8 14ZM18 7L22 8L23 13L19 11ZM17 15L21 16L18 20Z" f="#2f9548" /><P d="M14 1.5C5 2 2 9 4 15.5C6 21 11 24.5 18 24M14.5 24V27M5 27.2H25" s={K} sw="1.8" /></g>,
  <g><P d="M1 3L12 3L16 5L22 3H27V15L24 22L21 21L15 23L10 26L6 22L2 17L4 13L1 8Z" f={GR} s={K} /><P d="M1 3H12L10 12L4 13L1 8Z" f={BL} s={BD} /><P d="M14 15L19 12H27V18L24 23H15L16 19Z" f={BL} s={BD} /></g>,
  <g><P d="M17 0L25 28L14 20L2 26Z" f="#4a9fc9" /><P d="M17 0L14 20L2 26Z" f="#3a8fc0" /><P d="M14 20L25 28L21 16Z" f="#1270c4" /><P d="M17 0L20 9L21.5 16L14 20Z" f="#62b9dc" /></g>,
  <g><P d="M1 20A13 13 0 0 1 27 20H21Q20 14 14 14Q8 14 7 20Z" f={BL} s={BD} /><P d="M1 20A13 13 0 0 1 7.5 9L11 14Q7 16 7 20Z" f={WH} s={K} /><P d="M11 19L20 12L17 20Q14 22 11 19Z" f={K} /></g>,
  <g><R x={0.9} y={3.9} w={26.2} h={20.5} f={WH} s={K} sw={1.8} /><text x="14" y="17.5" fontSize="13" textAnchor="middle" fill={BM} textLength="21">123</text><P d="M3 21H25" s={GD} /></g>,
  <g><R x={0.9} y={0.9} w={26.2} h={26.2} f={WH} s={K} sw={1.8} /><P d="M6 5V23M8 11.5H16M8 20.5H16" s={GD} /><P d="M8 8H23M8 17H23" s={BD} sw="2.2" /></g>,
  <g><R x={0.9} y={2.9} w={26.2} h={21.5} f={WH} s={K} sw={1.8} /><P d="M4.5 14L9 6.5L13.5 14Z" f="#9ed6a8" s="#2f9548" /><P d="M14.8 7H24L19.4 14.5Z" f="#f4a5a5" s="#d13438" /><P d="M4 19.5H25" s={GD} /></g>,
  <g><P d="M27 12V.9H.9V26.5H16" f={WH} s={K} sw="1.8" /><P d="M1.8 3.500H26" s={GR} sw="3.4" /><P d="M1 6H27" s={K} sw="1.2" /><Gy x={5.5} y={10.5} w={4.5} h={4.5} /><Gy x={5.5} y={18.5} w={4.5} h={4.5} /><P d="M14.5 14.5H28V17.5L23.5 22V28H19V22L14.5 17.5Z" f={WH} s={K} /></g>,
  <g><R x={0.9} y={0.9} w={26.2} h={26.2} f={WH} s={K} sw={1.8} /><P d="M2 3.5H26" s={GR} sw="3.4" /><P d="M1 6H27" s={K} /><P d="M1 13H27M1 20H27M10 6V27M18.5 6V27" s={GD} sw="1.4" /></g>,
  <g><R x={0.9} y={0.9} w={26.2} h={26.2} f={WH} s={K} sw={1.8} /><P d="M2 3.5H26" s={GR} sw="3.4" /><P d="M18 6H27V27H1V19H18Z" f={BL} /><P d="M1 13H27M1 20H27M10 6V27M18.5 6V27" s={BD} sw="1.4" /><P d="M1 6H27" s={K} /><R x={0.9} y={0.9} w={26.2} h={26.2} s={K} sw={1.8} /></g>,
  <text x="5" y="22.5" fontSize="23.5" fontWeight="700" fill={BM} textLength="15" lengthAdjust="spacingAndGlyphs">R</text>,
  <text x="-2" y="20" fontSize="24" fontWeight="700" fill={BM} textLength="30" lengthAdjust="spacingAndGlyphs">Py</text>,
  <g><Axis /><P d="M1 6H18" s={BD} sw="1.8" /><circle cx="22" cy="6" r="3.2" fill={BL} stroke={BD} strokeWidth="1.6" /><P d="M1 13.5H14M1 19.5H8" s={GD} /><circle cx="16" cy="13.5" r="2" fill="none" stroke={GD} strokeWidth="1.5" /><circle cx="10" cy="19.5" r="2" fill="none" stroke={GD} strokeWidth="1.5" /></g>,
  <g><P d="M10 13H15M18 4H15V23H18M15 13H18" s={K} /><Bl x={1} y={9.5} w={9} h={7} /><Bl x={17.5} y={1} w={9.5} h={6.5} /><Bl x={17.5} y={10} w={9.5} h={6.5} /><Bl x={17.5} y={19} w={9.5} h={6.5} /></g>,
  <P d="M.9 2.5H27.1V20H12L6 26V20H.9Z" f="#fff" s={BD} sw={1.8} />,
  <g><P d="M4 7V1H16L24 9V27H4V15M16 1V9H24" f={WH} s={K} sw="1.8" /><P d="M10 13.5H19M7 18H16" s={BM} /><circle cx="4.5" cy="11" r="2.8" fill={BL} stroke={BD} strokeWidth="1.5" /></g>,
  <g><P d="M7 4H1V8Q1 13 8 13.5M21 4H27V8Q27 13 20 13.5" s={K} sw="1.8" /><P d="M7 3H21V11Q20 18 16 19V23H12V19Q8 18 7 11Z" f={WH} s={K} sw="1.8" /><Bl x={7} y={0.9} w={14} h={3} /><Bl x={6.5} y={23.5} w={15} h={3.5} /></g>,
  <g transform="translate(0 -1)"><P d="M3 1H16L24 9V29H3ZM16 1V9H24" f={WH} s={K} sw="1.8" /><R x={6} y={17} w={4} h={9} f={K} /><R x={12} y={21} w={4} h={5} f={K} /><R x={17.5} y={13} w={4} h={13} f={K} /></g>,
  <g><R x={1} y={4} w={26} h={20} f={WH} s={K} sw={2} /><text x="15.5" y="18" fontSize="12" textAnchor="middle" fill={BM} textLength="19">123</text><P d="M4 21H25" s={GD} /><g transform="translate(-1 -1) scale(.62)"><Bolt /></g></g>,
  <g><Wt x={15} y={1} w={11} h={11} s={GD} /><Wt x={1.5} y={15} w={11} h={11} s={GD} /><P d="M14.5 14.5H28V17.5L23.5 22V28H19V22L14.5 17.5Z" f={WH} s={K} /><P d="M6 12H13V4" s={BM} sw="2" /><g transform="translate(-1 -1) scale(.62)"><Bolt /></g></g>,
  <g><P d="M10 1.5H27V14M18 27H2V17" f={WH} s={BD} sw="2" /><P d="M3 26H17L18 17Q26 16 26 10V4L22 7Q19 6 17 9L18 13Q12 13 12 18L8 19L9 24Z" f={BL} s={BD} sw="1" /><P d="M0 1H8V10L4 15L0 10Z" f="#dd6b00" /><circle cx="4" cy="5" r="2" fill="#fff" /><circle cx="23" cy="25" r="4.2" fill="#dd6b00" /><circle cx="27" cy="16.5" r="2.3" fill="#dd6b00" /></g>,
  <g fill="none" stroke="#8b2fa0" strokeWidth="1.7"><path d="M12 2L.9 14L12 26M16 2L27 14L16 26M12 2L16 6M12 26L16 22M12 2H16M12 26H16M11 10L15 6L19 10L15 14ZM11 18L15 14L19 18L15 22ZM19 10L23 14L19 18L15 14Z" /></g>,
  <g fill="none" stroke="#1083d8" strokeWidth="1.7"><path d="M1 3H18L27 14L18 25H1L10 14ZM8 3L16 11M16 11L20 5M16 11L6 25M20 9L11 25" /></g>,
];

const Toggle = ({ on }) => on
  ? <span className="flex h-6 w-12 items-center justify-between rounded-full bg-[#117865] pl-[7px] pr-[7px] text-[13.4px] tracking-[-0.3px] text-white">On<span className="size-3 rounded-full bg-white" /></span>
  : <span className="flex h-6 w-12 items-center justify-between rounded-full border border-[#8a8886] bg-white px-[6px] text-[13.4px] tracking-[-0.4px] text-[#605e5c]"><span className="size-3 rounded-full bg-[#605e5c]" />Off</span>;

const Visualizations = () => (
  <aside className="flex w-[272px] shrink-0 flex-col border-x border-[#dddbd9] bg-[#f3f2f1] text-[#252423]">
    <div className="flex h-[60px] items-center justify-between pb-px pl-[12px] pr-[13px]">
      <span className="text-[22.6px] font-semibold tracking-[-0.2px]">Visualizations</span>
      <Collapse />
    </div>
    <span className="pl-[12px] text-[16.7px] font-semibold leading-[16px] tracking-[-0.15px]">Build visual</span>
    <div className="mt-[10px] flex pl-3">
      <span className="flex size-12 items-center justify-center rounded-[3px] bg-[#d0cfcd]">
        <Svg w={36} h={36}>
          <P d="M0 1H29" s="#252423" sw="1.9" />
          <R x={1} y={9} w={34} h={10.5} f="#117865" s="#252423" sw={2} strokeDasharray="3.5 1.8" />
          <R x={1} y={25} w={34} h={10} f="#117865" s="#252423" sw={2} strokeDasharray="3.5 1.8" />
        </Svg>
      </span>
      <Svg w={36} h={36} className="ml-[57px] mt-[6px]">
        <P d="M6 35H.8V1H15.5L26 11.5V14M15.5 1V11.5H26" s="#252423" sw="1.8" />
        <P d="M35 13Q37 15 23 29L19 25.5Q32 12 35 13ZM19 25.5Q13 26 13 33L7 34.5Q20 37 23 29" f="#f3f2f1" s="#252423" sw="1.7" />
      </Svg>
    </div>
    <Svg w={270} h={14} className="mt-[6px]"><P d="M0 12.5H24.5L36 1.5L47.5 12.5H270" s="#8a8886" sw="1.5" /></Svg>
    <div className="mt-[16px] grid grid-cols-[repeat(6,28px)] gap-[14px] pl-4">
      {GALLERY.map((g, i) => <Svg key={i} w={28} h={28}>{g}</Svg>)}
    </div>
    <div className="flex h-[55px] items-start pl-[19px] pt-[23px]">
      <Svg w={22} h={3}><circle cx="2" cy="1.5" r="1.5" fill={K} /><circle cx="11" cy="1.5" r="1.5" fill={K} /><circle cx="20" cy="1.5" r="1.5" fill={K} /></Svg>
    </div>
    <div className="flex flex-1 border-t border-[#dddbd9] text-[17px] tracking-[0.05px]">
      <div className="flex w-[261px] flex-col pl-[6px]">
        <span className="pl-3 pt-[11px] leading-[27px]">Values</span>
        <div className="mt-[7px] flex h-[42px] items-center rounded-[3px] border border-dashed border-[#c0bebb] bg-white pb-[2px] pl-[15px]">Add data fields here</div>
        <span className="mt-[15px] pl-3 font-semibold leading-[26px] tracking-[-0.3px] text-[#484644]">Drill through</span>
        <div className="mt-[12px] flex h-6 items-center justify-between pl-3 pr-6"><span>Cross-report</span><Toggle /></div>
        <div className="mt-4 flex h-6 items-center justify-between pl-3 pr-6"><span>Keep all filters</span><Toggle on /></div>
      </div>
      <span className="mt-[3px] h-[171px] w-[9px] rounded-full bg-[#d0cfcd]" />
    </div>
  </aside>
);

const TABLES = ['airlines - dim', 'Cancellation Reason - ...', 'Cancelled - dim', 'Diverted - dim', 'Flights - fact'];
const DataPane = () => (
  <aside className="flex flex-1 flex-col bg-[#f3f2f1] text-[#252423]">
    <div className="flex h-[60px] items-center justify-between pb-px pl-[12px] pr-[11px]">
      <span className="text-[22.6px] font-semibold tracking-[-0.2px]">Data</span>
      <Collapse />
    </div>
    <div className="ml-[6px] mt-2 flex h-9 w-[257px] items-center rounded-[5px] border border-[#d2d0ce] border-b-[#605e5c] bg-white pl-[19px] text-[19.8px] tracking-[-0.3px] text-[#707070]">
      <Lens size={21} s="#605e5c" flip />
      <span className="ml-[10px] pt-[3px]">Search</span>
    </div>
    <ul className="mt-[14px]">
      {TABLES.map((t) => (
        <li key={t} className="flex h-9 items-center whitespace-nowrap pl-6 text-[17px] tracking-[0.02px] text-[#3b3a39]">
          <Svg w={10} h={18}><P d="M.5.5L9 9L.5 17.5" s={K} sw="1.5" /></Svg>
          <Svg w={18} h={18} className="ml-[10px]">
            <R x={0.9} y={0.9} w={16.2} h={16.2} rx="3" s="#252423" sw={1.7} />
            <P d="M5.5 1V17M12.5 1V17M1 5H17M1 13H17" s="#252423" sw="1.5" />
          </Svg>
          <span className="ml-[8px] mt-[2px]">{t}</span>
        </li>
      ))}
    </ul>
  </aside>
);

const StatusBar = () => (
  <footer className="flex h-[37px] items-center border-b-[3px] border-t border-b-[#1d2a28] border-t-[#dddbd9] bg-[#f3f2f1] text-[17.1px] text-[#484644]">
    <span className="w-[1314px] pl-[6px] pt-[4px] tracking-[0.12px]">Page 1 of 2</span>
    <Svg w={184} h={20} className="mt-[3px]">
      <P d="M1 10.5H8" s="#484644" sw="2" />
      <P d="M14 9.5H164" s="#605e5c" sw="1.2" />
      <R x={41} y={1} w={6} h={17} f="#605e5c" />
      <P d="M89 6V13" s="#484644" sw="1.6" />
      <P d="M173 9.5H184M178.5 4V15" s="#484644" sw="2" />
    </Svg>
    <span className="ml-5 mt-px w-[63px] tracking-[-0.5px] text-[#605e5c]">46%</span>
    <Svg w={24} h={18} className="mt-[3px]">
      <R x={1} y={1} w={22} h={16} s="#605e5c" sw={1.8} />
      <P d="M4.5 7V4.5H8M16 4.5H19.5V7M19.5 11V13.5H16M8 13.5H4.5V11" s="#605e5c" sw="1.6" />
    </Svg>
    <span className="ml-[21px] mt-[4px] whitespace-nowrap">Update available (click to download)</span>
  </footer>
);

export default function App() {
  return (
    <div className="flex h-[1009px] w-[1918px] flex-col overflow-hidden bg-[#fafafa] font-['Open_Sans','Noto_Sans',sans-serif]">
      <TitleBar />
      <MenuBar />
      <Ribbon />
      <main className="flex h-[732px]">
        <Rail />
        <div className="flex w-[1317px] shrink-0 flex-col">
          <div className="flex h-[679px]">
            <div className="flex w-[1029px] flex-col border-r border-[#a8a6a3] bg-[#f8f7f2]">
              <Report />
              <div className="h-[3px] bg-[repeating-linear-gradient(90deg,transparent_0_3px,#605e5c_3px_6px)]" />
              <div className="h-3 bg-linear-to-b from-[#eeecea] to-[#f8f7f2]" />
            </div>
            <Filters />
          </div>
          <PageTabs />
        </div>
        <Visualizations />
        <DataPane />
      </main>
      <StatusBar />
    </div>
  );
}
